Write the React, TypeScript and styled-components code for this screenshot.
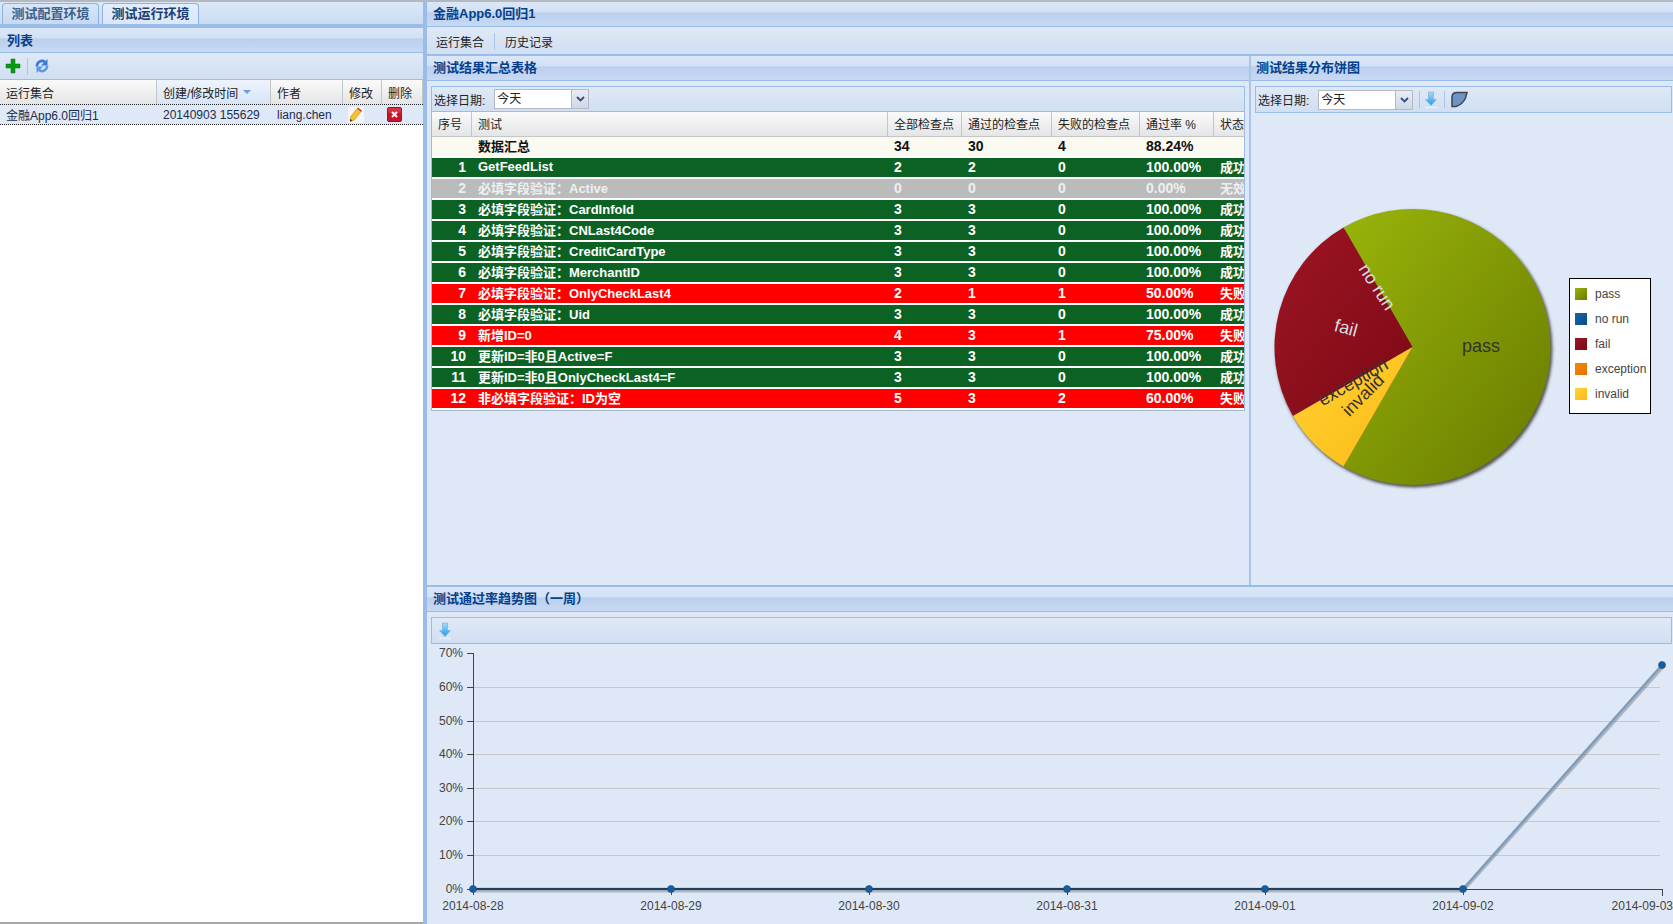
import React from "react";
import styled, { createGlobalStyle } from "styled-components";

const GlobalStyle = createGlobalStyle`
    html, body {
        margin: 0;
        padding: 0;
        background: #fff;
        overflow: hidden;
    }
    * {
        box-sizing: border-box;
    }
`;

const FONT = `"Liberation Sans", "Noto Sans CJK SC", sans-serif`;
const BORDER = "#99bce8";
const HEADER_BG = "linear-gradient(#dbe7f7 0, #d3e1f5 40%, #bccfec 46%, #c0d3ef 70%, #c8daf2 100%)";
const TOOLBAR_BG = "linear-gradient(#dfe9f6, #d1dff3)";

const Page = styled.div`
    width: 1673px;
    height: 924px;
    display: flex;
    border-top: 2px solid #b4b9c0;
    font-family: ${FONT};
    font-size: 12px;
    color: #222;
    overflow: hidden;
`;

const LeftColumn = styled.div`
    width: 423px;
    flex: none;
    display: flex;
    flex-direction: column;
    border-bottom: 2px solid #a8a8a8;
`;

const Splitter = styled.div`
    width: 4px;
    flex: none;
    background: ${BORDER};
`;

const RightColumn = styled.div`
    flex: 1;
    min-width: 0;
    display: flex;
    flex-direction: column;
    background: #dfe8f6;
`;

const TabBar = styled.div`
    height: 26px;
    flex: none;
    display: flex;
    align-items: flex-end;
    gap: 3px;
    padding: 1px 0 0 2px;
    background: linear-gradient(#dce8f8, #c9dbf3);
    border-bottom: 4px solid;
    border-image: linear-gradient(${BORDER} 25%, #dce8f8 25%, #dce8f8 75%, ${BORDER} 75%) 4;
`;

const Tab = styled.div<{ $active?: boolean }>`
    width: 97px;
    height: 21px;
    line-height: 19px;
    text-align: center;
    font-size: 13px;
    font-weight: bold;
    color: ${(p) => (p.$active ? "#1b3f70" : "#3f5f88")};
    background: ${(p) => (p.$active ? "linear-gradient(#e4eefb, #dbe7f7)" : "linear-gradient(#d9e6f7, #c6d9f1)")};
    border: 1px solid #8db2e3;
    border-bottom: 0;
    border-radius: 4px 4px 0 0;
`;

const PanelHeader = styled.div`
    height: 25px;
    flex: none;
    display: flex;
    align-items: center;
    padding: 0 0 1px 7px;
    font-size: 13px;
    font-weight: bold;
    color: #04408c;
    background: ${HEADER_BG};
    border-bottom: 1px solid ${BORDER};
`;

const SectionHeader = styled(PanelHeader)`
    padding: 0 0 3px 6px;
`;

const PieHeader = styled(SectionHeader)`
    padding-left: 5px;
`;

const TitleBar = styled(PanelHeader)`
    padding: 0 0 4px 6px;
`;

const IconBar = styled.div`
    height: 27px;
    flex: none;
    display: flex;
    align-items: center;
    gap: 6px;
    padding: 0 5px;
    background: ${TOOLBAR_BG};
    border-bottom: 1px solid ${BORDER};
`;

const BarDivider = styled.span`
    width: 1px;
    height: 17px;
    background: #a9c5ec;
    flex: none;
`;

const SETS_COLUMNS = "157px 114px 72px 39px 41px";

const SetsHead = styled.div`
    height: 25px;
    flex: none;
    display: grid;
    grid-template-columns: ${SETS_COLUMNS};
    background: linear-gradient(#fafafa, #e4e5e7);
    border-bottom: 1px solid #c5c5c5;
`;

const SetsHeadCell = styled.div<{ $sorted?: boolean }>`
    display: flex;
    align-items: center;
    gap: 5px;
    padding-left: 6px;
    white-space: nowrap;
    border-right: 1px solid #c5c5c5;
    background: ${(p) => (p.$sorted ? "linear-gradient(#eef4fc, #d6e4f7)" : "none")};
`;

const SortArrow = styled.span`
    width: 0;
    height: 0;
    border-left: 4px solid transparent;
    border-right: 4px solid transparent;
    border-top: 4px solid #6f9be0;
`;

const SetsRow = styled.div`
    height: 21px;
    flex: none;
    display: grid;
    grid-template-columns: ${SETS_COLUMNS};
    background: #dfe8f6;
    border-top: 1px dotted #222;
    border-bottom: 1px dotted #222;
    margin-top: -1px;
`;

const SetsCell = styled.div`
    display: flex;
    align-items: center;
    padding-left: 6px;
    white-space: nowrap;
    color: #1c2c4c;
`;

const SetsIconCell = styled(SetsCell)`
    padding-left: 5px;
`;

const LeftBody = styled.div`
    flex: 1;
    background: #fff;
`;

const NavBar = styled.div`
    height: 28px;
    flex: none;
    display: flex;
    align-items: center;
    gap: 10px;
    padding: 1px 0 0 9px;
    background: ${TOOLBAR_BG};
    border-bottom: 1px solid ${BORDER};
`;

const Upper = styled.div`
    height: 530px;
    flex: none;
    display: flex;
    border-top: 1px solid ${BORDER};
`;

const Section = styled.div<{ $width?: string }>`
    width: ${(p) => p.$width ?? "auto"};
    flex: ${(p) => (p.$width ? "none" : "1")};
    min-width: 0;
    display: flex;
    flex-direction: column;
`;

const SectionDivider = styled.div`
    width: 2px;
    flex: none;
    background: #a9c5ec;
`;

const TablePanel = styled.div`
    margin: 5px 4px 0;
    border: 1px solid ${BORDER};
    border-bottom-color: #a8b8cc;
    overflow: hidden;
`;

const FilterBar = styled.div`
    height: 25px;
    display: flex;
    align-items: center;
    padding-left: 2px;
    white-space: nowrap;
    background: ${TOOLBAR_BG};
    border-bottom: 1px solid ${BORDER};
`;

const FilterLabel = styled.span`
    margin-right: 9px;
`;

const Combo = styled.div`
    width: 95px;
    height: 20px;
    display: flex;
    border: 1px solid #b5b8c8;
    background: #fff;
`;

const ComboText = styled.div`
    flex: 1;
    line-height: 18px;
    padding-left: 2px;
`;

const ComboButton = styled.div`
    width: 17px;
    display: flex;
    align-items: center;
    justify-content: center;
    background: linear-gradient(#e8edf4, #cfd8e6);
    border-left: 1px solid #b5b8c8;
`;

const RESULT_COLUMNS = "40px 416px 74px 90px 88px 74px 60px";

const ResultHead = styled.div`
    height: 25px;
    display: grid;
    grid-template-columns: ${RESULT_COLUMNS};
    background: linear-gradient(#fafafa, #e4e5e7);
    border-bottom: 1px solid #c5c5c5;
`;

const ResultHeadCell = styled.div`
    display: flex;
    align-items: center;
    padding: 0 0 1px 6px;
    white-space: nowrap;
    border-right: 1px solid #c5c5c5;
`;

const ROW_COLOURS = {
    total: "#fbfaf0",
    ok: "#0c6223",
    none: "#bbbbbb",
    bad: "#ff0000",
};

const ResultRow = styled.div<{ $kind: keyof typeof ROW_COLOURS }>`
    height: 21px;
    display: grid;
    grid-template-columns: ${RESULT_COLUMNS};
    font-size: 13px;
    font-weight: bold;
    color: ${(p) => (p.$kind === "total" ? "#111" : p.$kind === "none" ? "#eef0f2" : "#fff")};
    background: ${(p) => ROW_COLOURS[p.$kind]};
    border-bottom: 2px solid #fff;
`;

const ResultCell = styled.div<{ $right?: boolean; $numeric?: boolean }>`
    display: flex;
    align-items: center;
    justify-content: ${(p) => (p.$right ? "flex-end" : "flex-start")};
    padding: ${(p) => (p.$right ? "0 6px 2px 0" : "0 0 2px 6px")};
    font-size: ${(p) => (p.$numeric ? "14px" : "13px")};
    white-space: nowrap;
    overflow: hidden;
`;

const InsetBar = styled.div<{ $right?: string; $pad?: string }>`
    height: 27px;
    flex: none;
    display: flex;
    align-items: center;
    margin: 5px ${(p) => p.$right ?? "1px"} 0 4px;
    padding-left: ${(p) => p.$pad ?? "1px"};
    white-space: nowrap;
    background: ${TOOLBAR_BG};
    border: 1px solid ${BORDER};
`;

const ToolDivider = styled(BarDivider)<{ $tight?: boolean }>`
    margin: 0 ${(p) => (p.$tight ? "3px" : "6px")} 0 ${(p) => (p.$tight ? "6px" : "5px")};
`;

const Lower = styled.div`
    flex: 1;
    min-height: 0;
    display: flex;
    flex-direction: column;
    border-top: 2px solid ${BORDER};
`;

const ChartSvg = styled.svg`
    display: block;
    flex: none;
    font-family: ${FONT};
`;

const AxisText = styled.text`
    font-size: 12px;
    fill: #444;
`;

const SliceText = styled.text<{ $light?: boolean }>`
    font-size: 18px;
    text-anchor: middle;
    dominant-baseline: central;
    fill: ${(p) => (p.$light ? "#d8dde2" : "#333")};
`;

const PlusIcon = () => (
    <svg width="16" height="16" viewBox="0 0 16 16">
        <path d="M6 1h4v5h5v4h-5v5H6v-5H1V6h5z" fill="#0a9a12" stroke="#0a7a10" strokeWidth="0.5" />
    </svg>
);

const RefreshIcon = () => (
    <svg width="16" height="16" viewBox="0 0 16 16">
        <path d="M3 8.500A5 5 0 0 1 11 4" fill="none" stroke="#3a78d4" strokeWidth="2.600" />
        <path d="M13.500 1v6.500H7z" fill="#3a78d4" />
        <path d="M13 7.500A5 5 0 0 1 5 12" fill="none" stroke="#5b9ae8" strokeWidth="2.600" />
        <path d="M2.500 15V8.500H9z" fill="#5b9ae8" />
    </svg>
);

const PencilIcon = () => (
    <svg width="16" height="16" viewBox="0 0 16 16">
        <rect width="16" height="16" fill="#f4f6f8" />
        <path d="M2 14.500l.5-4.500 6.500-8.500 4 3-6.500 8.500z" fill="#f5c02c" stroke="#c98a10" strokeWidth="0.6" />
        <path d="M9 1.500l1-1 4 3-1 1.500z" fill="#d0453a" />
        <path d="M2 14.500l.3-2.600 2.200 1.600z" fill="#333" />
    </svg>
);

const DeleteIcon = () => (
    <svg width="15" height="15" viewBox="0 0 15 15">
        <rect x="0.500" y="0.500" width="14" height="14" rx="1.500" fill="#c8142a" stroke="#a50f20" />
        <rect x="1" y="1" width="13" height="5" fill="#e04a5a" opacity="0.5" />
        <path d="M5 5l5 5M10 5l-5 5" stroke="#fff" strokeWidth="2" />
    </svg>
);

const DownloadIcon = () => (
    <svg width="16" height="18" viewBox="0 0 16 18">
        <defs>
            <linearGradient id="gDown" x1="0" y1="0" x2="0" y2="1">
                <stop offset="0" stopColor="#a8d8f6" />
                <stop offset="1" stopColor="#18a0f0" />
            </linearGradient>
        </defs>
        <path d="M5.500 1h5v7.500h3L8 14.500l-5.500-6h3z" fill="url(#gDown)" stroke="#7fb2dc" strokeWidth="0.7" />
        <path d="M2.500 16.500h11" stroke="#f4f8fc" strokeWidth="1.500" strokeDasharray="2 1" />
    </svg>
);

const PieIcon = () => (
    <svg width="17" height="17" viewBox="0 0 17 17">
        <path d="M1 15.500V6Q1 1.500 6 1.500h10L14.500 7Q11.500 13.500 5 15.500z" fill="#6f94c4" stroke="#3a4656" strokeWidth="1.500" />
    </svg>
);

const Chevron = () => (
    <svg width="9" height="6" viewBox="0 0 9 6">
        <path d="M1 1l3.500 3.500L8 1" fill="none" stroke="#2f4f86" strokeWidth="1.800" />
    </svg>
);

const DateCombo = () => (
    <Combo>
        <ComboText>今天</ComboText>
        <ComboButton>
            <Chevron />
        </ComboButton>
    </Combo>
);

const RESULTS: [keyof typeof ROW_COLOURS, string, string, string, string, string, string, string][] = [
    ["total", "", "数据汇总", "34", "30", "4", "88.24%", ""],
    ["ok", "1", "GetFeedList", "2", "2", "0", "100.00%", "成功"],
    ["none", "2", "必填字段验证：Active", "0", "0", "0", "0.00%", "无效"],
    ["ok", "3", "必填字段验证：CardInfoId", "3", "3", "0", "100.00%", "成功"],
    ["ok", "4", "必填字段验证：CNLast4Code", "3", "3", "0", "100.00%", "成功"],
    ["ok", "5", "必填字段验证：CreditCardType", "3", "3", "0", "100.00%", "成功"],
    ["ok", "6", "必填字段验证：MerchantID", "3", "3", "0", "100.00%", "成功"],
    ["bad", "7", "必填字段验证：OnlyCheckLast4", "2", "1", "1", "50.00%", "失败"],
    ["ok", "8", "必填字段验证：Uid", "3", "3", "0", "100.00%", "成功"],
    ["bad", "9", "新增ID=0", "4", "3", "1", "75.00%", "失败"],
    ["ok", "10", "更新ID=非0且Active=F", "3", "3", "0", "100.00%", "成功"],
    ["ok", "11", "更新ID=非0且OnlyCheckLast4=F", "3", "3", "0", "100.00%", "成功"],
    ["bad", "12", "非必填字段验证：ID为空", "5", "3", "2", "60.00%", "失败"],
];

const RESULT_HEADS = ["序号", "测试", "全部检查点", "通过的检查点", "失败的检查点", "通过率 %", "状态"];

const LEGEND: [string, string][] = [
    ["pass", "url(#gPass)"],
    ["no run", "url(#gNoRun)"],
    ["fail", "url(#gFail)"],
    ["exception", "url(#gException)"],
    ["invalid", "url(#gInvalid)"],
];

const Gradient = ({ id, from, to }: { id: string; from: string; to: string }) => (
    <linearGradient id={id} x1="0" y1="0" x2="1" y2="1">
        <stop offset="0" stopColor={from} />
        <stop offset="1" stopColor={to} />
    </linearGradient>
);

// viewBox is in page coordinates so the numbers can be read off the reference
const PieChart = () => (
    <ChartSvg width="422" height="440" viewBox="1251 113 422 440">
        <defs>
            <Gradient id="gPass" from="#99b40a" to="#687a00" />
            <Gradient id="gNoRun" from="#1764ab" to="#0c4a85" />
            <Gradient id="gFail" from="#9e1525" to="#7c0914" />
            <Gradient id="gException" from="#f78a00" to="#e36f00" />
            <Gradient id="gInvalid" from="#ffd232" to="#fdba16" />
            <filter id="pieShadow" x="-5%" y="-5%" width="110%" height="110%">
                <feGaussianBlur stdDeviation="1.500" />
            </filter>
        </defs>
        <circle cx="1414" cy="349" r="138.500" fill="#555" filter="url(#pieShadow)" />
        <path d="M1412.500 347L1343.500 227.500A138 138 0 1 1 1343.500 466.500Z" fill="url(#gPass)" />
        <path d="M1412.500 347L1293 416A138 138 0 0 1 1343.500 227.500Z" fill="url(#gFail)" />
        <path d="M1412.500 347L1343.500 466.500A138 138 0 0 1 1293 416Z" fill="url(#gInvalid)" />
        <SliceText x="1481" y="346">pass</SliceText>
        <SliceText $light x="1377" y="287" transform="rotate(57 1377 287)">no run</SliceText>
        <SliceText $light x="1346" y="328" transform="rotate(15 1346 328)">fail</SliceText>
        <SliceText x="1353" y="382" transform="rotate(-30 1353 382)">exception</SliceText>
        <SliceText x="1363" y="395" transform="rotate(-45 1363 395)">invalid</SliceText>
        <rect x="1569.500" y="278.500" width="81" height="135" fill="#fff" stroke="#000" />
        {LEGEND.map(([label, fill], i) => (
            <g key={label}>
                <rect x="1575" y={288 + i * 25} width="12" height="12" fill={fill} />
                <AxisText x="1595" y={298 + i * 25}>{label}</AxisText>
            </g>
        ))}
    </ChartSvg>
);

const Y_TICKS: [string, number][] = [
    ["70%", 653.5],
    ["60%", 687.5],
    ["50%", 721.5],
    ["40%", 754.5],
    ["30%", 788.5],
    ["20%", 821.5],
    ["10%", 855.5],
    ["0%", 889.5],
];

const X_TICKS: [string, number][] = [
    ["2014-08-28", 473],
    ["2014-08-29", 671],
    ["2014-08-30", 869],
    ["2014-08-31", 1067],
    ["2014-09-01", 1265],
    ["2014-09-02", 1463],
    ["2014-09-03", 1662],
];

const TrendChart = () => (
    <ChartSvg width="1246" height="280" viewBox="427 644 1246 280">
        {Y_TICKS.map(([label, y]) => (
            <g key={label}>
                {y > 660 && y < 880 && <path d={`M473 ${y}H1660`} stroke="#c8c8c8" />}
                <path d={`M467 ${y}H473`} stroke="#444" />
                <AxisText x="463" y={y + 3} textAnchor="end">{label}</AxisText>
            </g>
        ))}
        <path d="M473.500 653V889.500H1662.500V896" fill="none" stroke="#444" />
        {X_TICKS.map(([label, x], i) => (
            <g key={label}>
                <path d={`M${x + 0.5} 889V895`} stroke="#444" />
                <AxisText x={i === 6 ? 1673 : x} y="910" textAnchor={i === 6 ? "end" : "middle"}>{label}</AxisText>
            </g>
        ))}
        <path d="M473 891H1463L1663 667" fill="none" stroke="#555" strokeWidth="3" opacity="0.35" />
        <path d="M473 889H1463L1662 665" fill="none" stroke="#7f9cbb" strokeWidth="2.500" />
        <path d="M473 889H1463" fill="none" stroke="#1f3f5f" strokeWidth="2" />
        {X_TICKS.map(([label, x], i) => (
            <circle key={label} cx={x} cy={i === 6 ? 665 : 889} r="3.500" fill="#115fa6" stroke="#2a4560" strokeWidth="0.6" />
        ))}
    </ChartSvg>
);

const App: React.FC = () => (
    <>
        <GlobalStyle />
        <Page>
            <LeftColumn>
                <TabBar>
                    <Tab>测试配置环境</Tab>
                    <Tab $active>测试运行环境</Tab>
                </TabBar>
                <PanelHeader>列表</PanelHeader>
                <IconBar>
                    <PlusIcon />
                    <BarDivider />
                    <RefreshIcon />
                </IconBar>
                <SetsHead>
                    <SetsHeadCell>运行集合</SetsHeadCell>
                    <SetsHeadCell $sorted>创建/修改时间<SortArrow /></SetsHeadCell>
                    <SetsHeadCell>作者</SetsHeadCell>
                    <SetsHeadCell>修改</SetsHeadCell>
                    <SetsHeadCell>删除</SetsHeadCell>
                </SetsHead>
                <SetsRow>
                    <SetsCell>金融App6.0回归1</SetsCell>
                    <SetsCell>20140903 155629</SetsCell>
                    <SetsCell>liang.chen</SetsCell>
                    <SetsIconCell><PencilIcon /></SetsIconCell>
                    <SetsIconCell><DeleteIcon /></SetsIconCell>
                </SetsRow>
                <LeftBody />
            </LeftColumn>
            <Splitter />
            <RightColumn>
                <TitleBar>金融App6.0回归1</TitleBar>
                <NavBar>
                    <span>运行集合</span>
                    <BarDivider />
                    <span>历史记录</span>
                </NavBar>
                <Upper>
                    <Section $width="822px">
                        <SectionHeader>测试结果汇总表格</SectionHeader>
                        <TablePanel>
                            <FilterBar>
                                <FilterLabel>选择日期:</FilterLabel>
                                <DateCombo />
                            </FilterBar>
                            <ResultHead>
                                {RESULT_HEADS.map((head) => (
                                    <ResultHeadCell key={head}>{head}</ResultHeadCell>
                                ))}
                            </ResultHead>
                            {RESULTS.map(([kind, no, name, all, passed, failed, rate, state]) => (
                                <ResultRow key={name} $kind={kind}>
                                    <ResultCell $right $numeric>{no}</ResultCell>
                                    <ResultCell>{name}</ResultCell>
                                    <ResultCell $numeric>{all}</ResultCell>
                                    <ResultCell $numeric>{passed}</ResultCell>
                                    <ResultCell $numeric>{failed}</ResultCell>
                                    <ResultCell $numeric>{rate}</ResultCell>
                                    <ResultCell>{state}</ResultCell>
                                </ResultRow>
                            ))}
                        </TablePanel>
                    </Section>
                    <SectionDivider />
                    <Section>
                        <PieHeader>测试结果分布饼图</PieHeader>
                        <InsetBar $pad="2px">
                            <FilterLabel>选择日期:</FilterLabel>
                            <DateCombo />
                            <ToolDivider $tight />
                            <DownloadIcon />
                            <ToolDivider />
                            <PieIcon />
                        </InsetBar>
                        <PieChart />
                    </Section>
                </Upper>
                <Lower>
                    <SectionHeader>测试通过率趋势图（一周）</SectionHeader>
                    <InsetBar $pad="5px">
                        <DownloadIcon />
                    </InsetBar>
                    <TrendChart />
                </Lower>
            </RightColumn>
        </Page>
    </>
);

export default App;
